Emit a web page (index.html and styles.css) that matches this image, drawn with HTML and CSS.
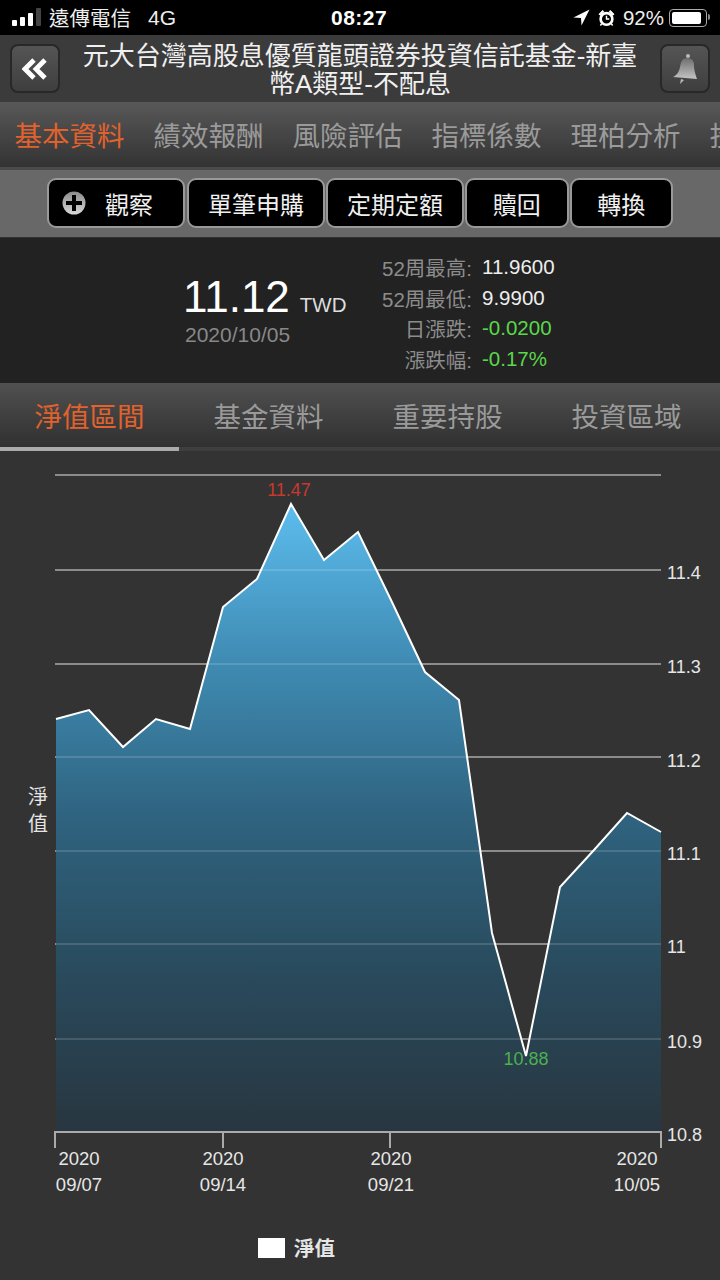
FILE: index.html
```html
<!DOCTYPE html>
<html lang="zh-Hant">
<head>
  <meta charset="UTF-8">
  <title>基金資料</title>
  <link rel="stylesheet" href="styles.css">
</head>
<body>
  <div class="status">
    <div class="status-left">
      <svg class="signal" width="32" height="20" viewBox="0 0 32 20">
        <rect x="1" y="12" width="5" height="6" rx="1" fill="#fff"/>
        <rect x="9" y="9" width="5" height="9" rx="1" fill="#fff"/>
        <rect x="17" y="5" width="5" height="13" rx="1" fill="#fff"/>
        <rect x="25" y="0" width="5" height="18" rx="1" fill="#444"/>
      </svg>
      <span class="carrier">遠傳電信</span>
      <span class="net">4G</span>
    </div>
    <div class="clock">08:27</div>
    <div class="status-right">
      <svg width="17" height="17" viewBox="0 0 17 17"><path d="M16.5 .5 L.5 8.5 L8 9 L8.5 16.5 Z" fill="#fff"/></svg>
      <svg width="17" height="18" viewBox="0 0 18 18">
        <circle cx="9" cy="10" r="6.2" fill="#000" stroke="#fff" stroke-width="2.8"/>
        <path d="M9 6.5 V10 H12" fill="none" stroke="#fff" stroke-width="1.5"/>
        <path d="M1 5 L5 1 L6 2.5 L2.5 6 Z M17 5 L13 1 L12 2.5 L15.5 6 Z" fill="#fff" stroke="#fff"/>
        <path d="M4 15 L2.5 17 M14 15 L15.5 17" stroke="#fff" stroke-width="1.6"/>
      </svg>
      <span class="pct">92%</span>
      <div class="battery"><div class="battery-fill"></div></div>
    </div>
  </div>

  <header class="top">
    <button class="square-btn">
      <svg width="26" height="24" viewBox="0 0 26 24">
        <path d="M12 3 L3 12 L12 21 M23 3 L14 12 L23 21" fill="none" stroke="#fff" stroke-width="4.8"/>
      </svg>
    </button>
    <h1 class="title">元大台灣高股息優質龍頭證券投資信託基金-新臺幣A類型-不配息</h1>
    <button class="square-btn">
      <svg width="28" height="32" viewBox="0 0 28 32">
        <defs>
          <linearGradient id="bell" x1="0" y1="0" x2="0" y2="1">
            <stop offset="0" stop-color="#6e6e6e"/>
            <stop offset="1" stop-color="#c4c4c4"/>
          </linearGradient>
        </defs>
        <circle cx="17" cy="3" r="2" fill="#bbb"/>
        <path d="M16 5 C11 5 10 9 9 14 C8 19 6 22 2 24 L26 26 C24 20 23 17 23 12 C23 8 21 5 16 5 Z" fill="url(#bell)"/>
        <path d="M10 26 L9 31 L13 27 Z" fill="#bbb"/>
      </svg>
    </button>
  </header>

  <nav class="tabs">
    <a class="tab active">基本資料</a>
    <a class="tab">績效報酬</a>
    <a class="tab">風險評估</a>
    <a class="tab">指標係數</a>
    <a class="tab">理柏分析</a>
    <a class="tab">投資組合</a>
  </nav>

  <div class="actions">
    <button class="action watch">
      <svg width="24" height="24" viewBox="0 0 24 24">
        <defs>
          <linearGradient id="plus" x1="0" y1="0" x2="0" y2="1">
            <stop offset="0" stop-color="#8a8a8a"/>
            <stop offset="1" stop-color="#d8d8d8"/>
          </linearGradient>
        </defs>
        <circle cx="12" cy="12" r="11.5" fill="url(#plus)"/>
        <path d="M12 4 V20 M4 12 H20" stroke="#000" stroke-width="4"/>
      </svg>
      <span>觀察</span>
    </button>
    <button class="action">單筆申購</button>
    <button class="action">定期定額</button>
    <button class="action short">贖回</button>
    <button class="action short">轉換</button>
  </div>

  <section class="info">
    <div class="price-box">
      <div><span class="price">11.12</span><span class="currency">TWD</span></div>
      <div class="date">2020/10/05</div>
    </div>
    <div class="stats">
      <span class="label">52周最高:</span><span class="value">11.9600</span>
      <span class="label">52周最低:</span><span class="value">9.9900</span>
      <span class="label">日漲跌:</span><span class="value down">-0.0200</span>
      <span class="label">漲跌幅:</span><span class="value down">-0.17%</span>
    </div>
  </section>

  <nav class="subtabs">
    <a class="subtab active">淨值區間</a>
    <a class="subtab">基金資料</a>
    <a class="subtab">重要持股</a>
    <a class="subtab">投資區域</a>
  </nav>

  <section class="chart">
    <svg width="720" height="829" viewBox="0 451 720 829">
      <defs>
        <linearGradient id="area" gradientUnits="userSpaceOnUse" x1="0" y1="504" x2="0" y2="1132">
          <stop offset="0" stop-color="#5cbdee"/>
          <stop offset="0.25" stop-color="#3f8bb3"/>
          <stop offset="0.5" stop-color="#2f637f"/>
          <stop offset="0.75" stop-color="#294a5c"/>
          <stop offset="1" stop-color="#283640"/>
        </linearGradient>
        <clipPath id="area-clip">
          <path d="M56 719 L89 710 L123 747 L156 719 L190 729 L223 607 L257 579 L291 504 L324 560 L358 532 L391 600 L425 672 L459 700 L492 933 L526 1056 L560 887 L594 850 L627 813 L661 832 V1131 H56 Z"/>
        </clipPath>
      </defs>
      <path class="grid" d="M55 475 H661 M55 570 H661 M55 664 H661 M55 757 H661 M55 851 H661 M55 944 H661 M55 1039 H661"/>
      <path fill="url(#area)" d="M56 719 L89 710 L123 747 L156 719 L190 729 L223 607 L257 579 L291 504 L324 560 L358 532 L391 600 L425 672 L459 700 L492 933 L526 1056 L560 887 L594 850 L627 813 L661 832 V1131 H56 Z"/>
      <path class="grid-over" clip-path="url(#area-clip)" d="M55 570 H661 M55 664 H661 M55 757 H661 M55 851 H661 M55 944 H661 M55 1039 H661"/>
      <path class="line" d="M56 719 L89 710 L123 747 L156 719 L190 729 L223 607 L257 579 L291 504 L324 560 L358 532 L391 600 L425 672 L459 700 L492 933 L526 1056 L560 887 L594 850 L627 813 L661 832"/>
      <path class="axis" d="M55 1148 V1132 H661 V1148 M223 1132 V1148 M390 1132 V1148"/>
      <text class="peak" x="289" y="496">11.47</text>
      <text class="trough" x="526" y="1065">10.88</text>
      <g class="y-labels">
        <text x="667" y="579">11.4</text>
        <text x="667" y="673">11.3</text>
        <text x="667" y="767">11.2</text>
        <text x="667" y="860">11.1</text>
        <text x="667" y="953">11</text>
        <text x="667" y="1048">10.9</text>
        <text x="667" y="1141">10.8</text>
      </g>
      <g class="x-labels">
        <text x="79" y="1165">2020</text>
        <text x="79" y="1191">09/07</text>
        <text x="223" y="1165">2020</text>
        <text x="223" y="1191">09/14</text>
        <text x="391" y="1165">2020</text>
        <text x="391" y="1191">09/21</text>
        <text x="637" y="1165">2020</text>
        <text x="637" y="1191">10/05</text>
      </g>
      <text class="y-title" x="38" y="804">淨</text>
      <text class="y-title" x="38" y="831">值</text>
      <rect x="258" y="1238" width="27" height="20" fill="#fff"/>
      <text class="legend" x="294" y="1256">淨值</text>
    </svg>
  </section>
</body>
</html>
```

FILE: styles.css
```css
body {
  margin: 0;
  width: 720px;
  height: 1280px;
  overflow: hidden;
  background-color: #333;
  font-family: "Liberation Sans", "Noto Sans CJK TC", sans-serif;
  color: #fff;
}
button {
  font-family: inherit;
  padding: 0;
  cursor: pointer;
}

.status {
  height: 35px;
  background-color: #000;
  display: flex;
  align-items: center;
  justify-content: space-between;
  padding: 0 10px 0 11px;
  position: relative;
}
.status-left, .status-right {
  display: flex;
  align-items: center;
}
.signal {
  margin-right: 6px;
}
.carrier {
  font-size: 20.5px;
  color: #eee;
  margin-top: -2px;
}
.net {
  font-size: 21px;
  color: #eee;
  margin-left: 17px;
}
.clock {
  position: absolute;
  left: 331px;
  font-size: 21px;
  font-weight: bold;
  letter-spacing: 0.5px;
}
.status-right {
  gap: 8px;
}
.pct {
  font-size: 20.5px;
  color: #eee;
}
.battery {
  width: 32px;
  height: 12px;
  border: 1px solid #aaa;
  border-radius: 4px;
  padding: 2px;
  margin: 0 3px 0 -3px;
  position: relative;
}
.battery::after {
  content: "";
  position: absolute;
  right: -4px;
  top: 4px;
  width: 2px;
  height: 6px;
  background-color: #888;
  border-radius: 0 2px 2px 0;
}
.battery-fill {
  height: 100%;
  width: 92%;
  background-color: #fff;
  border-radius: 2px;
}

.top {
  height: 67px;
  box-sizing: border-box;
  background-color: #3b3b3b;
  display: flex;
  align-items: center;
  padding: 0 10px;
}
.square-btn {
  width: 50px;
  height: 49px;
  flex-shrink: 0;
  display: flex;
  align-items: center;
  justify-content: center;
  border: 2px solid #282828;
  border-radius: 8px;
  background: linear-gradient(#555, #3e3e3e);
}
.title {
  flex: 1;
  margin: 0 22px;
  padding-top: 3px;
  font-size: 26px;
  line-height: 28px;
  font-weight: normal;
  text-align: center;
  color: #f0f0f0;
}

.tabs {
  height: 68px;
  box-sizing: border-box;
  display: flex;
  overflow: hidden;
  background: linear-gradient(#585858, #333);
  border-bottom: 3px solid #4a4a4a;
}
.tab {
  flex: 0 0 139px;
  text-align: center;
  font-size: 27.5px;
  line-height: 70px;
  height: 65px;
  color: #9a9a9a;
  position: relative;
}
.tab.active, .subtab.active {
  color: #e2622d;
}
.tab.active::after, .subtab.active::after {
  content: "";
  position: absolute;
  left: 0;
  right: 0;
  background-color: #aaa;
}
.tab.active::after {
  top: 65px;
  height: 3px;
}

.actions {
  height: 68px;
  box-sizing: border-box;
  background-color: #686868;
  border-bottom: 1px solid #333;
  display: flex;
  align-items: center;
  gap: 1px;
  padding: 0 0 1px 47px;
}
.action {
  width: 138px;
  height: 50px;
  box-sizing: border-box;
  background-color: #000;
  border: 2px solid #999;
  border-radius: 9px;
  color: #f0f0f0;
  font-size: 24px;
}
.action.short {
  width: 103.5px;
}
.watch {
  display: flex;
  align-items: center;
  padding-left: 13px;
  gap: 19px;
  margin-right: 1px;
}

.info {
  height: 145px;
  background-color: #222;
  display: flex;
  align-items: center;
  padding-left: 183px;
}
.price-box {
  width: 198px;
}
.price {
  font-size: 44px;
  line-height: 48px;
}
.currency {
  font-size: 20.5px;
  margin-left: 10px;
  color: #ddd;
}
.date {
  font-size: 21px;
  line-height: 27px;
  color: #888;
  margin-left: 2px;
}
.stats {
  display: grid;
  grid-template-columns: 91px auto;
  column-gap: 10px;
  grid-auto-rows: 30.6px;
  align-items: center;
  font-size: 20.5px;
  margin-top: 5px;
}
.label {
  text-align: right;
  color: #8c8c8c;
  white-space: nowrap;
}
.value {
  color: #eee;
}
.value.down {
  color: #5cd64a;
}

.subtabs {
  height: 68px;
  box-sizing: border-box;
  display: flex;
  background: linear-gradient(#505050, #303030);
  border-bottom: 4px solid #3e3e3e;
}
.subtab {
  flex: 0 0 179px;
  text-align: center;
  font-size: 27.5px;
  line-height: 70px;
  height: 64px;
  color: #9a9a9a;
  position: relative;
}
.subtab.active::after {
  top: 64px;
  height: 4px;
}

.chart {
  height: 829px;
}
.chart svg {
  display: block;
}
.grid {
  stroke: #8c8c8c;
  stroke-width: 2;
  fill: none;
}
.grid-over {
  stroke: rgba(255, 255, 255, 0.14);
  stroke-width: 2;
  fill: none;
}
.line {
  fill: none;
  stroke: #fff;
  stroke-width: 2;
}
.axis {
  fill: none;
  stroke: #aaa;
  stroke-width: 2;
}
.chart text {
  font-size: 18px;
  fill: #e6e6e6;
}
.chart .peak {
  fill: #c63a2e;
  text-anchor: middle;
}
.chart .trough {
  fill: #4caf50;
  text-anchor: middle;
}
.x-labels text {
  text-anchor: middle;
  font-size: 18.5px;
}
.chart .y-title {
  font-size: 20px;
  text-anchor: middle;
}
.chart .legend {
  font-size: 20.5px;
  font-weight: bold;
}
```
